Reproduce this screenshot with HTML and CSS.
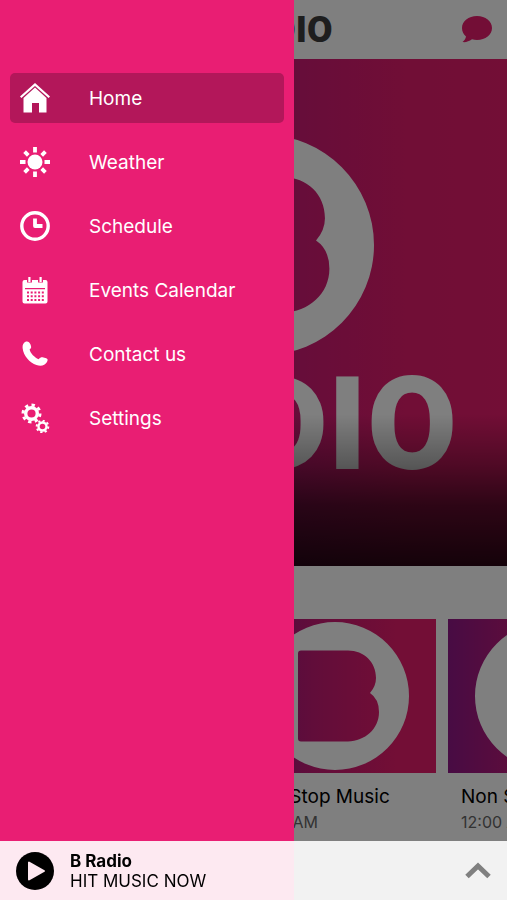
FILE: index.html
```html
<!DOCTYPE html>
<html lang="en">
<head>
  <meta charset="UTF-8">
  <meta name="viewport" content="width=device-width, initial-scale=1">
  <title>B Radio</title>
  <link rel="stylesheet" href="styles.css">
</head>
<body>

<svg width="0" height="0" class="symbols" aria-hidden="true">
  <symbol id="emblem" viewBox="0 0 148 148">
    <path fill="#fff" fill-rule="evenodd" d="M74 0a74 74 0 1 1 0 148a74 74 0 1 1 0-148zM40 28.500q-3 0-3 3v85q0 3 3 3H87C104 119 118 107 118 90Q118 77 109 71Q115 64 115 56C115 40 103 28.500 87 28.500z"/>
  </symbol>
</svg>

<div class="app">
  <header class="topbar">
    <h1 class="brand">B RADIO</h1>
    <button class="chat" aria-label="Chat">
      <svg width="30" height="27" viewBox="0 0 30 27">
        <path fill="#e61c6c" d="M15 0C23.500 0 30 5.300 30 12S23.500 24 15 24c-1.800 0-3.500-.2-5-.7C7 25.500 3.500 26.500.5 26c2-1.500 3.200-3.200 3.500-5.400C1.500 18.400 0 15.400 0 12 0 5.300 6.500 0 15 0z"/>
      </svg>
    </button>
  </header>

  <section class="hero">
    <svg class="hero-emblem"><use href="#emblem"/></svg>
    <div class="wordmark">RADIO</div>
  </section>

  <section class="shows">
    <article class="show">
      <div class="cover"><svg><use href="#emblem"/></svg></div>
      <h2>Non Stop Music</h2>
      <p>12:00 AM</p>
    </article>
    <article class="show">
      <div class="cover"><svg><use href="#emblem"/></svg></div>
      <h2>Non Stop Music</h2>
      <p>12:00 AM</p>
    </article>
    <article class="show">
      <div class="cover"><svg><use href="#emblem"/></svg></div>
      <h2>Non Stop Music</h2>
      <p>12:00 AM</p>
    </article>
  </section>
</div>

<div class="backdrop"></div>

<nav class="drawer">
  <a href="#" class="item active">
    <svg viewBox="0 0 30 30">
      <path d="M15 0L30 13.500 28.600 15 15 3 1.400 15 0 13.500z"/>
      <path d="M15 4.500L26.500 15V29.500H19V20H12V29.500H3.500V15z"/>
    </svg>
    Home
  </a>
  <a href="#" class="item">
    <svg viewBox="0 0 30 30">
      <circle cx="15" cy="15" r="7.500"/>
      <path class="line" stroke-width="3.800" d="M15 0v5.500M15 24.500V30M0 15h5.500M24.500 15H30M4.600 4.600l3.700 3.700M21.700 21.700l3.700 3.700M4.600 25.400l3.700-3.700M21.700 8.300l3.700-3.700"/>
    </svg>
    Weather
  </a>
  <a href="#" class="item">
    <svg viewBox="0 0 30 30">
      <circle class="line" cx="15" cy="15" r="13.200" stroke-width="3.400"/>
      <path class="line" stroke-width="3.800" stroke-linejoin="round" d="M15 7.500V15H22.500"/>
    </svg>
    Schedule
  </a>
  <a href="#" class="item">
    <svg viewBox="0 0 30 30">
      <path fill-rule="evenodd" d="M4.500 5H7v2.500h5V5h6v2.500h5V5h2.500Q27.500 5 27.500 7V26.500Q27.500 28.500 25.500 28.500H4.500Q2.500 28.500 2.500 26.500V7Q2.500 5 4.500 5zM5 13v1.300h20V13z"/>
      <path d="M8.300 2h2.200v5H8.300zM19.500 2h2.200v5h-2.200z"/>
      <path class="grid" d="M7 17.500h17M7 21.300h17M7 25h17"/>
    </svg>
    Events Calendar
  </a>
  <a href="#" class="item">
    <svg viewBox="0 0 30 30">
      <path d="M6 2.500C8 2 9.500 3 10.500 5.500C11.500 8 11.500 9 9.600 10.600C10.500 14.500 14.500 18.500 18.600 20.300C20.500 18.300 21.500 18 23.500 18.500L26.300 19.300C28.200 20 27.800 21.500 27 23C25 26.500 21 27.500 16.500 26C9.500 23.500 3.500 17 2.600 9C2.300 6 3.500 3.300 6 2.500z"/>
    </svg>
    Contact us
  </a>
  <a href="#" class="item">
    <svg viewBox="0 0 30 30">
      <circle class="line" cx="11.500" cy="10.500" r="5.800" stroke-width="3.400"/>
      <circle class="line" cx="11.500" cy="10.500" r="8.500" stroke-width="3" pathLength="16" stroke-dasharray="1 1"/>
      <circle class="line" cx="22.500" cy="23.500" r="4" stroke-width="2.400"/>
      <circle class="line" cx="22.500" cy="23.500" r="5.800" stroke-width="2" pathLength="16" stroke-dasharray="1 1"/>
    </svg>
    Settings
  </a>
</nav>

<footer class="player">
  <button class="play" aria-label="Play">
    <svg width="38" height="38" viewBox="0 0 38 38">
      <circle cx="19" cy="19" r="19"/>
      <path fill="#fde8f1" stroke="#fde8f1" stroke-width="2" stroke-linejoin="round" d="M13 10.500v17L28 19z"/>
    </svg>
  </button>
  <div class="now">
    <strong>B Radio</strong>
    <span>HIT MUSIC NOW</span>
  </div>
  <button class="expand" aria-label="Expand player">
    <svg width="26" height="17" viewBox="0 0 26 17">
      <path fill="none" stroke="#808080" stroke-width="5" d="M2 14.500L13 4l11 10.500"/>
    </svg>
  </button>
</footer>

</body>
</html>
```
FILE: styles.css
```css
* {
  box-sizing: border-box;
}

body {
  margin: 0;
  background: #fff;
  color: #000;
  font-family: Inter, "Liberation Sans", sans-serif;
  overflow-x: hidden;
}

button {
  border: 0;
  padding: 0;
  background: none;
  cursor: pointer;
}

svg {
  display: block;
}

.symbols {
  position: absolute;
}

.app {
  min-height: 100vh;
  padding-bottom: 59px;
  overflow: hidden;
}

.topbar {
  display: grid;
  grid-template-columns: 1fr auto 1fr;
  align-items: center;
  height: 59px;
  padding: 0 15px 0 30px;
}

.brand {
  grid-column: 2;
  margin: 0;
  color: #3c3c3c;
  font: 900 37px/59px Roboto, sans-serif;
}

.chat {
  justify-self: end;
}

.hero {
  position: relative;
  display: flex;
  flex-direction: column;
  align-items: center;
  aspect-ratio: 1;
  padding: 15% 0 0 4%;
  background: linear-gradient(90deg, #941880, #ca1a76 55%, #e21c6c 80%, #e61c6c);
}

.hero::after {
  content: "";
  position: absolute;
  inset: 0;
  background: linear-gradient(transparent 70%, rgba(0, 0, 0, 0.3) 80%, rgba(0, 0, 0, 0.6) 88%, rgba(0, 0, 0, 0.82));
}

.hero-emblem {
  width: 220px;
  height: 220px;
}

.wordmark {
  color: #fff;
  font: 900 130px/140px Roboto, sans-serif;
}

.shows {
  display: flex;
  gap: 12px;
  padding: 53px 20px 0;
}

.show {
  flex: 0 0 202px;
}

.cover {
  display: flex;
  align-items: center;
  justify-content: center;
  height: 154px;
  background: linear-gradient(90deg, #901888, #c41a74 40%, #e61c6c 80%);
}

.cover svg {
  width: 148px;
  height: 148px;
}

.show h2 {
  margin: 12px 0 0 13px;
  font-size: 19px;
  font-weight: 400;
  line-height: 24px;
}

.show p {
  margin: 2px 0 0 13px;
  color: #666;
  font-size: 16px;
  line-height: 22px;
}

.backdrop {
  position: fixed;
  inset: 0;
  background: rgba(0, 0, 0, 0.5);
}

.drawer {
  position: fixed;
  top: 0;
  bottom: 0;
  left: 0;
  width: 58%;
  display: flex;
  flex-direction: column;
  gap: 14px;
  padding: 73px 10px 0;
  background: #e91e73;
}

.item {
  display: flex;
  align-items: center;
  gap: 39px;
  height: 50px;
  padding: 0 10px;
  border-radius: 5px;
  color: #fff;
  font-size: 19px;
  text-decoration: none;
}

.item.active {
  background: #b3175a;
}

.item svg {
  width: 30px;
  height: 30px;
  fill: #fff;
}

.item .line {
  fill: none;
  stroke: #fff;
}

.item .grid {
  stroke: #e91e73;
  stroke-width: 2;
  stroke-dasharray: 2 1.700;
}

.player {
  position: fixed;
  right: 0;
  bottom: 0;
  left: 0;
  display: flex;
  align-items: center;
  gap: 16px;
  height: 59px;
  padding: 0 16px;
  background: rgba(255, 255, 255, 0.9);
}

.now {
  flex: 1;
  display: flex;
  flex-direction: column;
  font-size: 17px;
  line-height: 20px;
}
```
